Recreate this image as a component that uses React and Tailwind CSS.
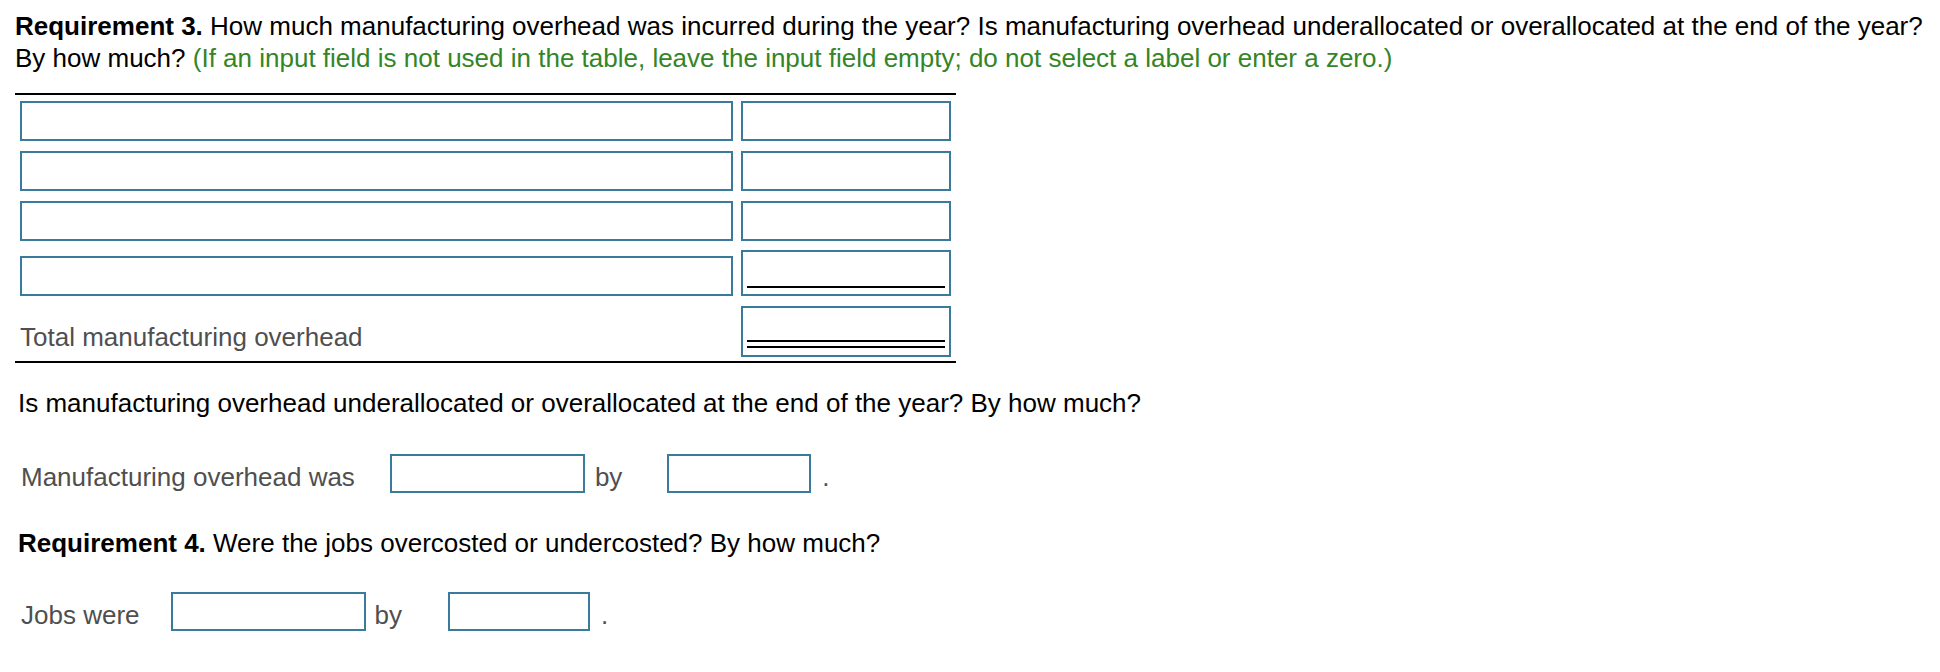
import React from "react";

// Blank answer cell with the blue outline used across the worksheet
const Field = ({ className = "" }) => (
  <div className={`border-2 border-[#3a7a9c] bg-white ${className}`} />
);

const Label = ({ children, className = "" }) => (
  <span className={`text-[#4f4f4f] leading-[32px] ${className}`}>{children}</span>
);

const OverheadTable = () => {
  const rows = [0, 1, 2];

  return (
    <div className="w-[941px]">
      <div className="mt-[19px] h-[2px] bg-black" />
      <div className="mt-[6px] flex flex-col gap-[10px] px-[5px]">
        {rows.map((r) => (
          <div key={r} className="flex gap-[8px]">
            <Field className="h-[40px] w-[714px]" />
            <Field className="h-[40px] w-[210px]" />
          </div>
        ))}

        {/* last line item, single rule under the amount */}
        <div className="mt-[-1px] flex items-end gap-[8px]">
          <Field className="h-[40px] w-[714px]" />
          <div className="flex h-[46px] w-[210px] flex-col justify-end border-2 border-[#3a7a9c] px-[4px] pb-[6px]">
            <div className="h-[2px] bg-black" />
          </div>
        </div>

        {/* total, double rule */}
        <div className="flex items-end gap-[8px]">
          <div className="w-[714px] pb-[4px]">
            <Label className="block leading-[28px]">Total manufacturing overhead</Label>
          </div>
          <div className="flex h-[51px] w-[210px] flex-col justify-end border-2 border-[#3a7a9c] px-[4px] pb-[7px]">
            <div className="h-[2px] bg-black" />
            <div className="mt-[4px] h-[2px] bg-black" />
          </div>
        </div>
      </div>
      <div className="mt-[4px] h-[2px] bg-black" />
    </div>
  );
};

export default function App() {
  return (
    <div className="min-h-[672px] w-[1940px] bg-white pl-[15px] font-['Liberation_Sans',Arial,sans-serif] text-[26px] text-black">
      <p className="pt-[10px] leading-[32px] whitespace-nowrap">
        <span className="font-bold">Requirement 3.</span> How much manufacturing overhead was incurred during the year? Is
        manufacturing overhead underallocated or overallocated at the end of the year?
        <br />
        By how much?{" "}
        <span className="text-[#338526]">
          (If an input field is not used in the table, leave the input field empty; do not select a label or enter a zero.)
        </span>
      </p>

      <OverheadTable />

      <p className="mt-[24px] pl-[3px] leading-[32px]">
        Is manufacturing overhead underallocated or overallocated at the end of the year? By how much?
      </p>

      <div className="mt-[35px] flex items-end pl-[6px]">
        <Label>Manufacturing overhead was</Label>
        <Field className="ml-[35px] h-[39px] w-[195px]" />
        <Label className="ml-[10px]">by</Label>
        <Field className="ml-[45px] h-[39px] w-[144px]" />
        <Label className="ml-[11px]">.</Label>
      </div>

      <p className="mt-[34px] pl-[3px] leading-[32px]">
        <span className="font-bold">Requirement 4.</span> Were the jobs overcosted or undercosted? By how much?
      </p>

      <div className="mt-[33px] flex items-end pl-[6px]">
        <Label>Jobs were</Label>
        <Field className="ml-[31px] h-[39px] w-[195px]" />
        <Label className="ml-[9px]">by</Label>
        <Field className="ml-[46px] h-[39px] w-[142px]" />
        <Label className="ml-[11px]">.</Label>
      </div>
    </div>
  );
}
